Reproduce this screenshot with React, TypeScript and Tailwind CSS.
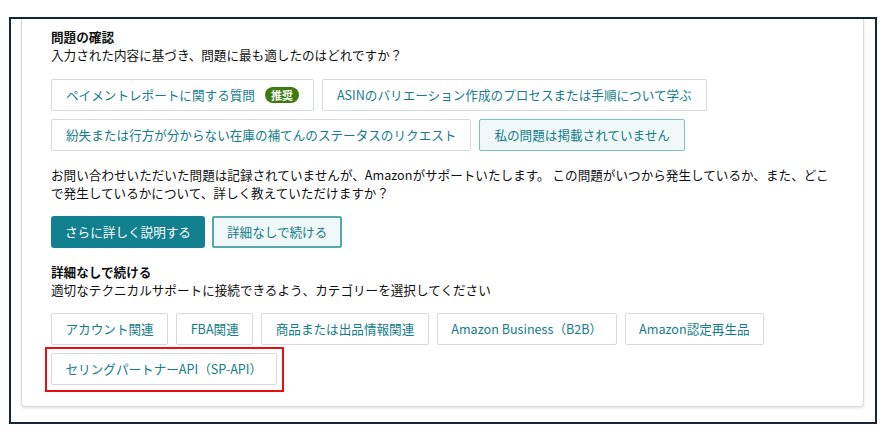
import React from "react";

const font = { fontFamily: '"Noto Sans CJK JP", "Noto Sans", sans-serif' };

function OptBtn({ children, selected = false, tight = false }: { children: React.ReactNode; selected?: boolean; tight?: boolean }) {
  return (
    <div
      className={
        "h-[32px] flex items-center rounded-[2px] border text-[12.6px] leading-[18px] text-[#137d8b] " +
        (tight ? "px-[13.5px] " : "px-[14px] ") +
        (selected ? "bg-[#f0f7f8] border-[#7cc2bc]" : "bg-white border-[#d5dbdb]")
      }
    >
      {children}
    </div>
  );
}

export default function App() {
  return (
    <div className="w-[889px] h-[436px] bg-white pt-[17px] pl-[9px]" style={font}>
      <div className="w-[868px] h-[407px] border-2 border-[#14253a] overflow-hidden px-[10px]">
        <div className="w-[843px] bg-white border-x border-b border-[#dadada] rounded-b-[4px] shadow-[0_1px_3px_rgba(0,0,0,0.12)] pl-[29px] pr-[28px] pt-[9px] pb-[21px] text-[#0f1111] text-[12.6px] leading-[18px]">
          <div className="font-bold">問題の確認</div>
          <div>入力された内容に基づき、問題に最も適したのはどれですか？</div>

          <div className="mt-[15px] flex flex-wrap gap-[8px]">
            <OptBtn>
              ペイメントレポートに関する質問
              <span className="ml-[10px] h-[16px] px-[6px] rounded-full bg-[#3d7a0f] text-white font-bold text-[11px] leading-[16px] flex items-center">
                推奨
              </span>
            </OptBtn>
            <OptBtn>ASINのバリエーション作成のプロセスまたは手順について学ぶ</OptBtn>
            <OptBtn>紛失または行方が分からない在庫の補てんのステータスのリクエスト</OptBtn>
            <OptBtn selected>私の問題は掲載されていません</OptBtn>
          </div>

          <p className="mt-[15px]">
            お問い合わせいただいた問題は記録されていませんが、Amazonがサポートいたします。 この問題がいつから発生しているか、また、どこで発生しているかについて、詳しく教えていただけますか？
          </p>

          <div className="mt-[14px] flex gap-[7px]">
            <div className="h-[32px] px-[14px] flex items-center rounded-[3px] bg-[#13808f] text-white">
              さらに詳しく説明する
            </div>
            <div className="h-[32px] px-[13px] flex items-center rounded-[2px] border-2 border-[#56a7a9] bg-[#f0f7f8] text-[#137d8b]">
              詳細なしで続ける
            </div>
          </div>

          <div className="mt-[15px] font-bold">詳細なしで続ける</div>
          <div>適切なテクニカルサポートに接続できるよう、カテゴリーを選択してください</div>

          <div className="mt-[14px] flex flex-wrap gap-[8px]">
            <OptBtn tight>アカウント関連</OptBtn>
            <OptBtn tight>FBA関連</OptBtn>
            <OptBtn tight>商品または出品情報関連</OptBtn>
            <OptBtn tight>Amazon Business（B2B）</OptBtn>
            <OptBtn tight>Amazon認定再生品</OptBtn>
            <div className="relative">
              <OptBtn tight>セリングパートナーAPI（SP-API）</OptBtn>
              <div className="absolute -left-[6px] -right-[7px] -top-[6px] -bottom-[7px] border-2 border-[#e8100f]" />
            </div>
          </div>
        </div>
      </div>
    </div>
  );
}
